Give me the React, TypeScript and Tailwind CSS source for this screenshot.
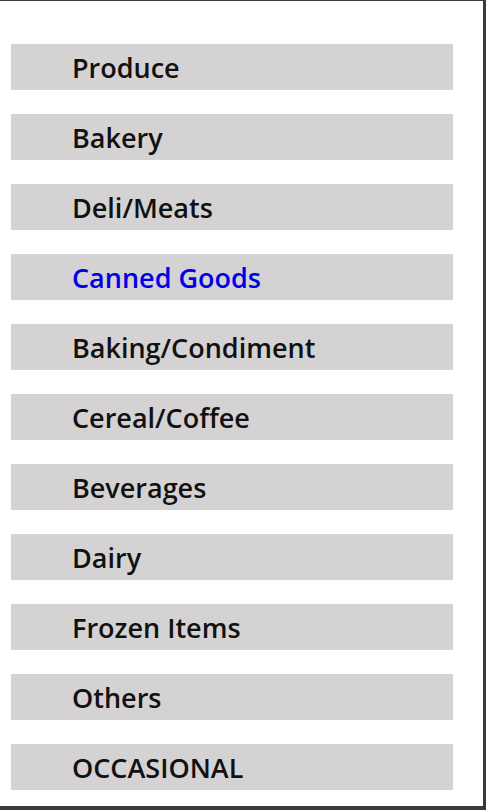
import React from "react";

const items = [
  "Produce",
  "Bakery",
  "Deli/Meats",
  "Canned Goods",
  "Baking/Condiment",
  "Cereal/Coffee",
  "Beverages",
  "Dairy",
  "Frozen Items",
  "Others",
  "OCCASIONAL",
];

export default function App() {
  return (
    <div className="w-[486px] h-[810px] bg-white border-t border-t-[#3a3a3a] border-r-[3px] border-r-[#3a3a3a] border-b-4 border-b-[#3a3a3a] pt-[43px] pl-[11px] pr-[30px] flex flex-col gap-[24px] overflow-hidden">
      {items.map((name) => (
        <div
          key={name}
          className="h-[46px] shrink-0 bg-[#d5d2d4] flex items-center pl-[61px]"
        >
          <span
            className={`text-[27px] font-semibold leading-none ${
              name === "Canned Goods" ? "text-[#0000e6]" : "text-[#111111]"
            }`}
            style={{ fontFamily: '"Open Sans", "Noto Sans", sans-serif' }}
          >
            {name}
          </span>
        </div>
      ))}
    </div>
  );
}
